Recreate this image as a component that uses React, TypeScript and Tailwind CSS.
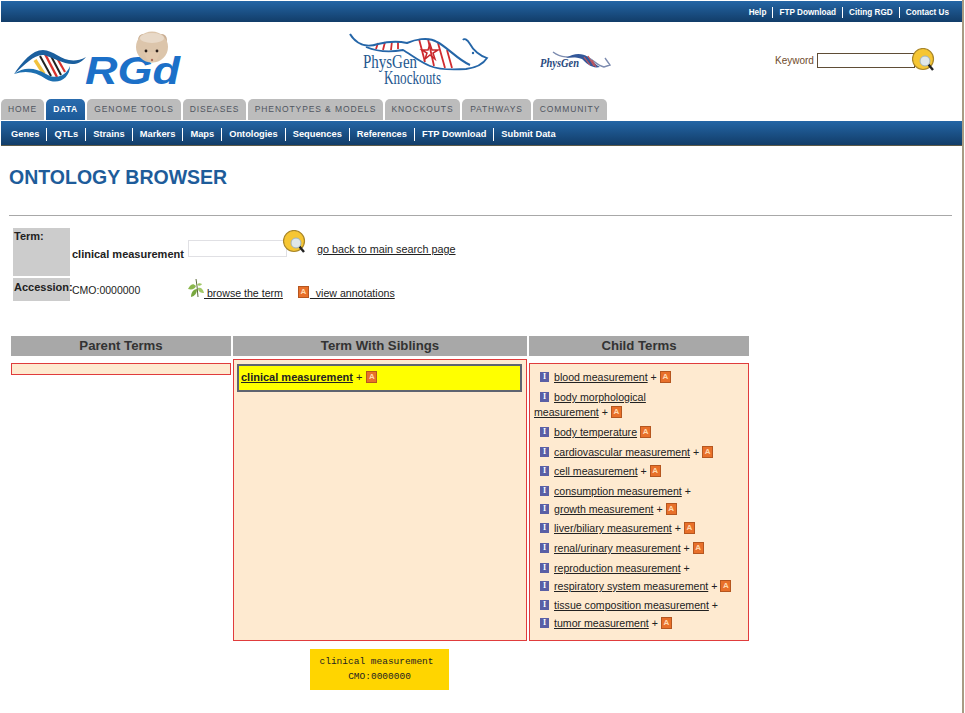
const topLinks = ['Help', 'FTP Download', 'Citing RGD', 'Contact Us'];

const tabs = [
    { label: 'HOME', width: 'w-[43px]' },
    { label: 'DATA', width: 'w-[39px]', active: true },
    { label: 'GENOME TOOLS', width: 'w-[94px]' },
    { label: 'DISEASES', width: 'w-[63px]' },
    { label: 'PHENOTYPES & MODELS', width: 'w-[135px]' },
    { label: 'KNOCKOUTS', width: 'w-[75px]' },
    { label: 'PATHWAYS', width: 'w-[69px]' },
    { label: 'COMMUNITY', width: 'w-[74px]' },
];

const subLinks = ['Genes', 'QTLs', 'Strains', 'Markers', 'Maps', 'Ontologies', 'Sequences', 'References', 'FTP Download', 'Submit Data'];

const children = [
    { name: 'blood measurement', plus: true, ann: true, gap: 'mt-[6px]' },
    { name: 'body morphological', tail: 'measurement', plus: true, ann: true, gap: 'mt-[5px]' },
    { name: 'body temperature', ann: true, gap: 'mt-[5px]' },
    { name: 'cardiovascular measurement', plus: true, ann: true, gap: 'mt-[5px]' },
    { name: 'cell measurement', plus: true, ann: true, gap: 'mt-[4px]' },
    { name: 'consumption measurement', plus: true, gap: 'mt-[5px]' },
    { name: 'growth measurement', plus: true, ann: true, gap: 'mt-[3px]' },
    { name: 'liver/biliary measurement', plus: true, ann: true, gap: 'mt-[4px]' },
    { name: 'renal/urinary measurement', plus: true, ann: true, gap: 'mt-[5px]' },
    { name: 'reproduction measurement', plus: true, gap: 'mt-[5px]' },
    { name: 'respiratory system measurement', plus: true, ann: true, gap: 'mt-[3px]' },
    { name: 'tissue composition measurement', plus: true, gap: 'mt-[4px]' },
    { name: 'tumor measurement', plus: true, ann: true, gap: 'mt-[3px]' },
];

const SearchButton = () => (
    <svg width="24" height="26" viewBox="0 0 24 26" className="shrink-0">
        <circle cx="11" cy="11" r="10.5" fill="#f6c633" stroke="#a8862a" strokeWidth="1.2" />
        <line x1="16" y1="16" x2="21" y2="22" stroke="#222" strokeWidth="2.4" />
        <circle cx="13" cy="13" r="5" fill="#dfe7ea" stroke="#9fb2bb" strokeWidth="1" />
    </svg>
);

const AnnotationIcon = () => (
    <span className="inline-flex w-[11px] h-[12px] mt-px items-center justify-center bg-[#e8702a] border border-[#b5561f] text-[8px] leading-none text-[#ffd9b0] align-top font-bold">
        A
    </span>
);

const InfoIcon = () => (
    <span className="inline-flex w-[9px] h-[10px] mt-[2px] items-center justify-center bg-[#5a5fa5] text-[8px] leading-none text-white font-bold font-['Liberation_Serif',serif] align-top">
        I
    </span>
);

const LeafIcon = () => (
    <svg width="17" height="20" viewBox="0 0 17 20" className="shrink-0">
        <path d="M8 1 L9 8 L10 19" stroke="#5c6b3a" strokeWidth="1" fill="none" />
        <path d="M8 8 C4 4 2 8 0 11 C4 12 7 11 8 8Z" fill="#8cb84e" />
        <path d="M9 11 C5 11 3 15 3 19 C7 18 9 15 9 11Z" fill="#78a83e" />
        <path d="M10 10 C13 9 15 11 16 15 C13 15 10 14 10 10Z" fill="#a2c868" />
        <path d="M9 7 C10 5 12 5 14 6 C13 8 11 8 9 7Z" fill="#a2c868" />
    </svg>
);

const RgdLogo = () => (
    <svg width="170" height="62" viewBox="12 30 170 62" className="shrink-0">
        <path d="M35 60 L44 74" stroke="#f2c23e" strokeWidth="3.5" />
        <path d="M40 56 L51 76" stroke="#222" strokeWidth="2" />
        <path d="M45 54 L57 77" stroke="#d8312c" strokeWidth="2.4" />
        <path d="M51 56 L61 75" stroke="#222" strokeWidth="2" />
        <path d="M57 58 L65 72" stroke="#d8312c" strokeWidth="2.2" />
        <path d="M14 74 C22 62 32 50 43 50 C56 50 66 68 86 57 C74 72 58 59 44 55 C34 54 26 64 14 74Z" fill="#1b5f9e" />
        <path d="M14 74 C24 66 36 68 46 74 C56 80 66 76 70 66 C70 78 58 86 46 79 C36 72 26 70 14 74Z" fill="#1d6fb0" />
        <text x="85" y="84" fontFamily="'Liberation Sans',sans-serif" fontWeight="700" fontStyle="italic" fontSize="38" textLength="95" lengthAdjust="spacingAndGlyphs" fill="#1c70c8">
            RGd
        </text>
        <ellipse cx="143" cy="40" rx="5" ry="6" fill="#c9ae93" />
        <ellipse cx="162" cy="40" rx="5" ry="6" fill="#c9ae93" />
        <ellipse cx="152" cy="47" rx="16" ry="15.5" fill="#dcc5ab" />
        <ellipse cx="152" cy="38" rx="12" ry="5" fill="#e8d9c8" />
        <path d="M144 52 C148 66 156 66 160 52Z" fill="#e2c9ae" />
        <circle cx="146" cy="51" r="1.4" fill="#2a1f1a" />
        <circle cx="157" cy="51" r="1.4" fill="#2a1f1a" />
        <circle cx="152" cy="60" r="1.2" fill="#a86a5a" />
    </svg>
);

const KnockoutsLogo = () => (
    <svg width="142" height="58" viewBox="348 32 142 58" className="shrink-0">
        <path d="M376 49 L378 43 M383 50 L385 42 M391 50 L392 41 M398 49 L398 42" stroke="#d02c30" strokeWidth="1.8" />
        <path d="M419 39 L425 62 M428 39 L434 66 M438 43 L445 68 M447 50 L452 68" stroke="#d02c30" strokeWidth="1.8" />
        <path d="M350 34 C356 44 366 48 378 44 C390 41 398 41 407 43 C414 40 428 36 437 42 C446 46 458 60 470 65" stroke="#2566a8" strokeWidth="2" fill="none" />
        <path d="M366 47 C378 52 392 52 403 50 C410 54 420 62 430 66 C440 70 452 70 466 69 C474 68 482 66 487 58 C480 56 473 50 470 44 C467 39 464 38 463 40" stroke="#2566a8" strokeWidth="1.8" fill="none" />
        <circle cx="473" cy="53" r="1.2" fill="#2566a8" />
        <path d="M430 44 L432 50 L438 50 L433 53 L435 59 L430 55 L425 59 L427 53 L422 50 L428 50Z" fill="none" stroke="#c8282c" strokeWidth="1.5" />
        <text x="363" y="68" fontFamily="'Liberation Serif',serif" fontSize="18" textLength="54" lengthAdjust="spacingAndGlyphs" fill="#24588f">
            PhysGen
        </text>
        <text x="384" y="84" fontFamily="'Liberation Serif',serif" fontSize="18" textLength="57" lengthAdjust="spacingAndGlyphs" fill="#24588f">
            Knockouts
        </text>
    </svg>
);

const PhysGenLogo = () => (
    <svg width="71" height="22" viewBox="540 51 71 22" className="shrink-0">
        <path d="M553 53 C562 60 572 58 582 57 C590 56 595 66 604 68 L610 66 L605 59" stroke="#7d8cb0" strokeWidth="1.4" fill="none" />
        <path d="M566 59 C574 54 582 54 588 58 C592 62 596 66 600 68 C592 70 586 64 582 60 C576 58 572 58 566 59Z" fill="#33589a" />
        <path d="M584 58 L590 66 M588 57 L594 67 M592 61 L596 68" stroke="#c8555a" strokeWidth="1.2" />
        <text x="540" y="68" fontFamily="'Liberation Serif',serif" fontStyle="italic" fontWeight="700" fontSize="12" textLength="39" lengthAdjust="spacingAndGlyphs" fill="#2a4a80">
            PhysGen
        </text>
    </svg>
);

export default function App() {
    return (
        <div className="w-[965px] h-[713px] overflow-hidden bg-white font-['Liberation_Sans',Arial,sans-serif] text-[#222] flex">
            <div className="w-[962px] pl-px pt-px shrink-0">
                {/* Top links bar */}
                <div className="h-[21px] bg-gradient-to-b from-[#2466a6] to-[#123d69] flex items-center justify-end pr-[7px] pt-[2px]">
                    {topLinks.map((link, i) => (
                        <a key={link} className={`px-[6px] text-[8.2px] font-bold leading-[11px] text-white ${i > 0 ? 'border-l border-white' : ''}`}>
                            {link}
                        </a>
                    ))}
                </div>

                {/* Logos and keyword search */}
                <div className="h-[77px] flex items-center pl-[11px]">
                    <RgdLogo />
                    <div className="ml-[166px]">
                        <KnockoutsLogo />
                    </div>
                    <div className="ml-[50px]">
                        <PhysGenLogo />
                    </div>
                    <div className="ml-[164px] flex items-center">
                        <span className="text-[10px] text-[#6f4a2a] mr-[3px]">Keyword</span>
                        <div className="w-[98px] h-[15px] border border-[#5f4d36] bg-white" />
                        <div className="-ml-[3px]">
                            <SearchButton />
                        </div>
                    </div>
                </div>

                {/* Main tabs */}
                <div className="h-[21px] flex gap-[2px]">
                    {tabs.map((tab) => (
                        <div
                            key={tab.label}
                            className={`${tab.width} rounded-t-[5px] flex items-center justify-center text-[8.5px] ${
                                tab.active
                                    ? 'bg-gradient-to-b from-[#2a6cae] to-[#1c5a98] text-white font-bold tracking-[0.5px]'
                                    : 'bg-[#bcbcbc] text-[#4f5560] tracking-[0.9px]'
                            }`}
                        >
                            {tab.label}
                        </div>
                    ))}
                </div>

                {/* Sub navigation */}
                <div className="mt-px h-[25px] bg-gradient-to-b from-[#2466a6] to-[#123d69] flex items-center pl-[3px] pt-[2px] border-b border-[#5c5a48]">
                    {subLinks.map((link, i) => (
                        <a key={link} className={`px-[7px] text-[9.3px] font-bold leading-[13px] text-white ${i > 0 ? 'border-l border-white' : ''}`}>
                            {link}
                        </a>
                    ))}
                </div>

                {/* Page title */}
                <div className="h-[62px] flex items-center pl-[8px] pt-[2px]">
                    <h1 className="text-[19.5px] font-bold text-[#1e5c9a] leading-none">ONTOLOGY BROWSER</h1>
                </div>
                <div className="mt-[7px] ml-[8px] w-[943px] h-px bg-[#a8a8a8]" />

                {/* Term search */}
                <div className="mt-[12px] ml-[12px] flex">
                    <div className="w-[57px] h-[48px] bg-[#cccccc] text-[11px] font-bold pl-px leading-[17px]">Term:</div>
                    <div className="ml-[2px] h-[48px] flex items-start">
                        <span className="mt-[18px] text-[11px] font-bold">clinical measurement</span>
                        <div className="ml-[4px] mt-[12px] w-[99px] h-[17px] border border-[#e0e0e4] bg-white" />
                        <div className="-ml-[4px] mt-[2px]">
                            <SearchButton />
                        </div>
                        <a className="ml-[10px] mt-[13px] text-[10.8px] text-[#222] underline">go back to main search page</a>
                    </div>
                </div>
                <div className="mt-[2px] ml-[12px] flex">
                    <div className="w-[57px] h-[23px] bg-[#cccccc] text-[11px] font-bold pl-px leading-[18px] whitespace-nowrap">Accession:</div>
                    <div className="ml-[2px] flex items-start">
                        <span className="mt-[5px] w-[116px] text-[10.5px]">CMO:0000000</span>
                        <LeafIcon />
                        <a className="mt-[8px] -ml-px text-[10.6px] underline whitespace-pre"> browse the term</a>
                        <div className="ml-[15px] mt-[7px] flex">
                            <AnnotationIcon />
                        </div>
                        <a className="ml-[1px] mt-[8px] text-[10.6px] underline whitespace-pre">  view annotations</a>
                    </div>
                </div>

                {/* Three column browser */}
                <div className="mt-[34px] ml-[10px] flex gap-[2px] items-start">
                    <div className="w-[220px]">
                        <div className="h-[20px] bg-[#a8a8a8] text-center text-[13.2px] font-bold leading-[20px] text-[#333]">Parent Terms</div>
                        <div className="mt-[7px] h-[12px] border border-[#e03c3c] bg-[#feead0]" />
                    </div>
                    <div className="w-[294px]">
                        <div className="h-[20px] bg-[#a8a8a8] text-center text-[13.2px] font-bold leading-[20px] text-[#333]">Term With Siblings</div>
                        <div className="mt-[3px] h-[282px] border border-[#e03c3c] bg-[#feead0] pt-[4px] pl-[3px] pr-[4px]">
                            <div className="h-[28px] bg-[#ffff00] border-2 border-[#5f6470] flex items-center gap-[3px] pl-[2px] pb-[2px] text-[11px]">
                                <a className="font-bold underline">clinical measurement</a>
                                <span>+</span>
                                <span className="ml-px flex">
                                    <AnnotationIcon />
                                </span>
                            </div>
                        </div>
                    </div>
                    <div className="w-[220px]">
                        <div className="h-[20px] bg-[#a8a8a8] text-center text-[13.2px] font-bold leading-[20px] text-[#333]">Child Terms</div>
                        <div className="mt-[7px] h-[278px] border border-[#e03c3c] bg-[#feead0] pl-[4px] pr-[8px] text-[10.6px] leading-[15px]">
                            {children.map((child) => (
                                <div key={child.name} className={child.gap}>
                                    <span className="inline-block w-[6px]" />
                                    <InfoIcon />
                                    <a className="ml-[5px] underline">{child.name}</a>
                                    {child.tail ? (
                                        <>
                                            <br />
                                            <a className="underline">{child.tail}</a>
                                        </>
                                    ) : null}
                                    {child.plus ? <span> +</span> : null}
                                    {child.ann ? (
                                        <span className="ml-[3px]">
                                            <AnnotationIcon />
                                        </span>
                                    ) : null}
                                </div>
                            ))}
                        </div>
                    </div>
                </div>

                {/* Selected term */}
                <div className="mt-[8px] ml-[309px] w-[139px] h-[41px] bg-[#ffd500] flex flex-col items-center justify-center font-['Liberation_Mono',monospace] text-[9.5px] leading-[15px] text-[#222]">
                    <span className="mr-[6px]">clinical measurement</span>
                    <span>CMO:0000000</span>
                </div>
            </div>
            <div className="w-[2px] h-full bg-[#a89c84] shrink-0" />
        </div>
    );
}
